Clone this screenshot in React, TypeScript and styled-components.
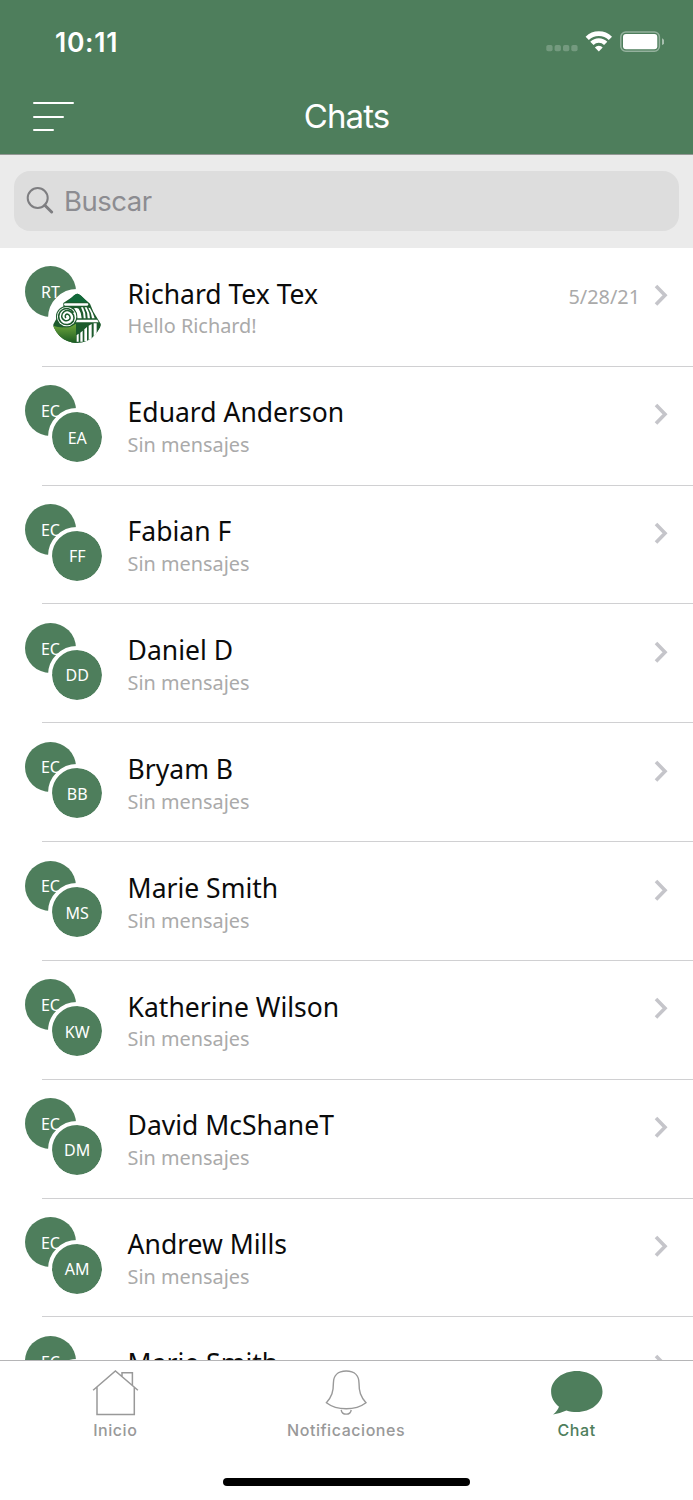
import React from "react";
import styled, { createGlobalStyle } from "styled-components";

const GREEN = "#4e7e5c";

const GlobalStyle = createGlobalStyle`
  *, *::before, *::after { box-sizing: border-box; }
  html, body { margin: 0; padding: 0; background: #fff; }
`;

const Screen = styled.div`
  display: flex;
  flex-direction: column;
  width: 693px;
  height: 1500px;
  overflow: hidden;
  background: #fff;
  font-family: "Noto Sans", sans-serif;
`;

const Header = styled.header`
  flex: none;
  height: 155px;
  background: ${GREEN};
  border-bottom: 1px solid #939794;
  color: #fff;
  font-family: Inter, sans-serif;
`;

const StatusBar = styled.div`
  display: flex;
  align-items: center;
  justify-content: space-between;
  height: 83px;
  padding: 0 29px 0 55px;
`;

const Clock = styled.div`
  font-size: 26.5px;
  font-weight: 600;
  line-height: 32px;
  letter-spacing: 0.7px;
`;

const StatusIcons = styled.svg`
  display: block;
  width: 118px;
  height: 22px;
`;

const NavBar = styled.div`
  display: grid;
  grid-template-columns: 1fr auto 1fr;
  align-items: center;
  height: 67px;
  padding: 0 33px;
`;

const MenuButton = styled.button`
  display: flex;
  flex-direction: column;
  align-items: flex-start;
  gap: 11.4px;
  padding: 0;
  border: 0;
  background: none;
`;

const MenuLine = styled.span<{ $width: number }>`
  width: ${(p) => p.$width}px;
  height: 2px;
  border-radius: 1px;
  background: #fff;
`;

const Title = styled.h1`
  margin: 0 0 2px;
  font-size: 33px;
  font-weight: 400;
  line-height: 40px;
  letter-spacing: -0.9px;
`;

const SearchArea = styled.div`
  flex: none;
  height: 93px;
  padding: 16px 14px 17px 14px;
  background: #ebebeb;
`;

const SearchField = styled.div`
  display: flex;
  align-items: center;
  height: 60px;
  padding-left: 12px;
  border-radius: 16px;
  background: #dddddd;
  color: #8c8c91;
  font: 400 27.5px/34px Inter, sans-serif;
  letter-spacing: -0.5px;
`;

const SearchIcon = styled.svg`
  width: 28px;
  height: 28px;
  margin: -2px 10px 0 0;
`;

const List = styled.main`
  flex: 1;
  min-height: 0;
  padding-top: 0.2px;
  overflow: hidden;
`;

const Row = styled.div`
  display: flex;
  height: 118.83px;
  padding: 18.2px 25px 0 25px;
  background: linear-gradient(#d0d0d2, #d0d0d2) 42px 100% / 100% 1.2px no-repeat;
`;

const AvatarPair = styled.div`
  position: relative;
  flex: none;
  width: 78px;
  height: 78px;
`;

const Avatar = styled.div<{ $front?: boolean }>`
  position: absolute;
  left: ${(p) => (p.$front ? 23.2 : 0.2)}px;
  top: ${(p) => (p.$front ? 22.8 : 0.1)}px;
  display: flex;
  align-items: center;
  justify-content: center;
  width: ${(p) => (p.$front ? 58 : 50.4)}px;
  height: ${(p) => (p.$front ? 58 : 50.4)}px;
  padding-top: 1px;
  border: ${(p) => (p.$front ? "4px solid #fff" : "0")};
  border-radius: 50%;
  background: ${GREEN};
  background-clip: padding-box;
  color: #fff;
  font-size: 16px;
  line-height: 22px;
`;

const LogoAvatar = styled(Avatar)`
  padding-top: 0;
  background: #fff;
`;

const Logo = styled.svg`
  flex: none;
  width: 50px;
  height: 50px;
`;

const Texts = styled.div`
  flex: 1;
  padding: 9.2px 0 0 24.6px;
`;

const Name = styled.div`
  color: #0b0b0b;
  font-size: 26.5px;
  line-height: 36px;
  white-space: nowrap;
`;

const Preview = styled.div`
  margin-top: 0.8px;
  color: #aaaaaa;
  font-size: 19.85px;
  line-height: 28px;
  white-space: nowrap;
`;

const Meta = styled.div`
  display: flex;
  align-items: center;
  height: 58px;
  color: #aaaaaa;
  font-size: 19.85px;
`;

const DateLabel = styled.span`
  padding-top: 2px;
`;

const Chevron = styled.svg`
  width: 14px;
  height: 22px;
  margin-left: 14px;
`;

const TabBar = styled.nav`
  flex: none;
  display: flex;
  flex-direction: column;
  height: 140px;
  border-top: 1px solid #b5b5b7;
  background: #fff;
`;

const Tabs = styled.div`
  display: grid;
  grid-template-columns: 230.6px 231px 230px;
  height: 117px;
`;

const Tab = styled.div<{ $active?: boolean }>`
  display: flex;
  flex-direction: column;
  align-items: center;
  padding-top: 8px;
  color: ${(p) => (p.$active ? GREEN : "#999999")};
  font: 500 16px/20px Inter, sans-serif;
  letter-spacing: 0.55px;
`;

const TabIcon = styled.svg`
  width: 54px;
  height: 48px;
  margin-bottom: 3px;
`;

const HomeIndicator = styled.div`
  align-self: center;
  width: 247px;
  height: 8px;
  border-radius: 4px;
  background: #000;
`;

type Chat = { back: string; front?: string; name: string; preview: string; date?: string };

const none = "Sin mensajes";
const chats: Chat[] = [
  { back: "RT", name: "Richard Tex Tex", preview: "Hello Richard!", date: "5/28/21" },
  { back: "EC", front: "EA", name: "Eduard Anderson", preview: none },
  { back: "EC", front: "FF", name: "Fabian F", preview: none },
  { back: "EC", front: "DD", name: "Daniel D", preview: none },
  { back: "EC", front: "BB", name: "Bryam B", preview: none },
  { back: "EC", front: "MS", name: "Marie Smith", preview: none },
  { back: "EC", front: "KW", name: "Katherine Wilson", preview: none },
  { back: "EC", front: "DM", name: "David McShaneT", preview: none },
  { back: "EC", front: "AM", name: "Andrew Mills", preview: none },
  { back: "EC", front: "MS", name: "Marie Smith", preview: none },
];

const ColumnLogo = () => (
  <Logo viewBox="0 0 150 150">
    <defs>
      <clipPath id="disc"><circle cx="75" cy="75" r="75" /></clipPath>
      <linearGradient id="leaf" x1="0" y1="0" x2="0" y2="1">
        <stop offset="0" stopColor="#70a83c" />
        <stop offset="1" stopColor="#1b5b22" />
      </linearGradient>
    </defs>
    <g clipPath="url(#disc)">
      <path d="M76 2Q82 2 92 13L114 32Q119 44 124 56L146 92Q149 98 145 104Q122 140 98 150H52Q22 138 4 104Q1 98 5 92L14 76V62L34 42V30L60 13Q70 2 76 2Z" fill="#1d5b2d" />
      <path d="M76 2Q82 2 92 13L106 28H46L60 13Q70 2 76 2Z" fill="#12693a" />
      <path d="M3 98Q20 104 36 103Q56 104 72 92V150H52Q22 138 3 104Z" fill="url(#leaf)" />
      <rect x="36" y="31" width="73" height="7" rx="3.500" fill="#fff" />
      <path d="M66 46Q74 43 80 47Q88 58 89 76H76Q76 60 66 46ZM87 43H93Q101 58 101 76H95Q95 58 87 43ZM98 43H104Q113 58 114 76H107Q107 58 98 43ZM109 44L114 45Q125 62 128 76H120Q119 60 109 44Z" fill="#fff" />
      <path d="M70 80H136L140 88H66Z" fill="#fff" />
      <path d="M74 126L80 122V146H74ZM85 119L92 113V146H85ZM97 109L105 102V144H97ZM110 98L119 93V138L110 143ZM125 91H134V121L125 132Z" fill="#fff" />
      <circle cx="44" cy="71" r="32" fill="#1d5b2d" />
      <circle cx="44" cy="71" r="29" fill="#fff" />
      <path d="M65 59A24 24 0 1 0 64 84A22 22 0 0 0 52 54A17 17 0 0 0 29 70A14 14 0 0 0 53 79A11 11 0 0 0 45 63A7 7 0 0 0 42 75" fill="none" stroke="#1d5b2d" strokeWidth="4.5" />
    </g>
  </Logo>
);

const ChatRow = ({ chat }: { chat: Chat }) => (
  <Row>
    <AvatarPair>
      <Avatar>{chat.back}</Avatar>
      {chat.front ? <Avatar $front>{chat.front}</Avatar> : <LogoAvatar $front><ColumnLogo /></LogoAvatar>}
    </AvatarPair>
    <Texts>
      <Name>{chat.name}</Name>
      <Preview>{chat.preview}</Preview>
    </Texts>
    <Meta>
      {chat.date && <DateLabel>{chat.date}</DateLabel>}
      <Chevron viewBox="0 0 14 22" fill="none" stroke="#c5c5ca" strokeWidth="3.6">
        <path d="M2 2L11 11.2L2 20.4" />
      </Chevron>
    </Meta>
  </Row>
);

export default function App() {
  return (
    <Screen>
      <GlobalStyle />
      <Header>
        <StatusBar>
          <Clock>10:11</Clock>
          <StatusIcons viewBox="546 31 118 22">
            <g fill="#fff" fillOpacity="0.22">
              <rect x="546.3" y="45" width="6.3" height="6.3" rx="1.8" />
              <rect x="554.6" y="45" width="6.3" height="6.3" rx="1.8" />
              <rect x="563" y="45" width="6.3" height="6.3" rx="1.8" />
              <rect x="571.3" y="45" width="6.3" height="6.3" rx="1.8" />
            </g>
            <g fill="none" stroke="#fff" strokeWidth="4.6">
              <path d="M587.2 38.4A16.6 16.6 0 0 1 610.4 38.4" />
              <path d="M591.9 43.4A9.8 9.8 0 0 1 605.7 43.4" />
            </g>
            <path d="M594.9 47.6A5 5 0 0 1 602.7 47.6L598.8 51.6Z" fill="#fff" />
            <rect x="620.8" y="32" width="38.6" height="19.2" rx="5" fill="none" stroke="#fff" strokeOpacity="0.4" strokeWidth="1.5" />
            <rect x="623" y="34" width="34.3" height="15.2" rx="3" fill="#fff" />
            <path d="M662 38.3Q664.4 39.4 664.4 41.7Q664.4 44 662 45.1Z" fill="#fff" fillOpacity="0.5" />
          </StatusIcons>
        </StatusBar>
        <NavBar>
          <MenuButton aria-label="Menú">
            <MenuLine $width={41} />
            <MenuLine $width={31} />
            <MenuLine $width={21} />
          </MenuButton>
          <Title>Chats</Title>
        </NavBar>
      </Header>
      <SearchArea>
        <SearchField>
          <SearchIcon viewBox="0 0 28 28" fill="none" stroke="#7e7e81">
            <circle cx="11.7" cy="12" r="10" strokeWidth="2" />
            <path d="M18.8 19.2L25.6 26" strokeWidth="3" strokeLinecap="round" />
          </SearchIcon>
          Buscar
        </SearchField>
      </SearchArea>
      <List>
        {chats.map((chat, i) => (
          <ChatRow key={i} chat={chat} />
        ))}
      </List>
      <TabBar>
        <Tabs>
          <Tab>
            <TabIcon viewBox="88.3 1369 54 48" fill="none" stroke="currentColor" strokeWidth="1.5">
              <path d="M93.4 1390.2L115.7 1371L138.2 1390.2M97.3 1387V1414.5H134.6V1387M122.3 1376.5V1372.7H132.7V1385.3" />
            </TabIcon>
            Inicio
          </Tab>
          <Tab>
            <TabIcon viewBox="319.1 1369 54 48" fill="none" stroke="currentColor" strokeWidth="1.4">
              <path d="M346.3 1371C337.5 1371 333.5 1376 333.5 1383C333.5 1391.5 332 1396.5 326.5 1402.7C331.5 1406.5 338.5 1408.8 346.3 1408.8C354.1 1408.8 361.1 1406.5 366.1 1402.7C360.6 1396.5 359.1 1391.5 359.1 1383C359.1 1376 355.1 1371 346.3 1371Z" />
              <path d="M341.3 1409.8C342.1 1415.6 350.5 1415.6 351.3 1409.8" />
            </TabIcon>
            Notificaciones
          </Tab>
          <Tab $active>
            <TabIcon viewBox="549.5 1369 54 48" fill="currentColor">
              <path d="M576.3 1371C590.5 1371 602 1380 602 1391.5C602 1403 590.5 1412 576.3 1412C572.5 1412 569 1411.4 565.9 1410.4C561.5 1412.4 557 1413.7 552.6 1414.4C555.5 1412 557.5 1409.5 558.5 1406.7C553.6 1403 550.6 1397.6 550.6 1391.5C550.6 1380 562.1 1371 576.3 1371Z" />
            </TabIcon>
            Chat
          </Tab>
        </Tabs>
        <HomeIndicator />
      </TabBar>
    </Screen>
  );
}
